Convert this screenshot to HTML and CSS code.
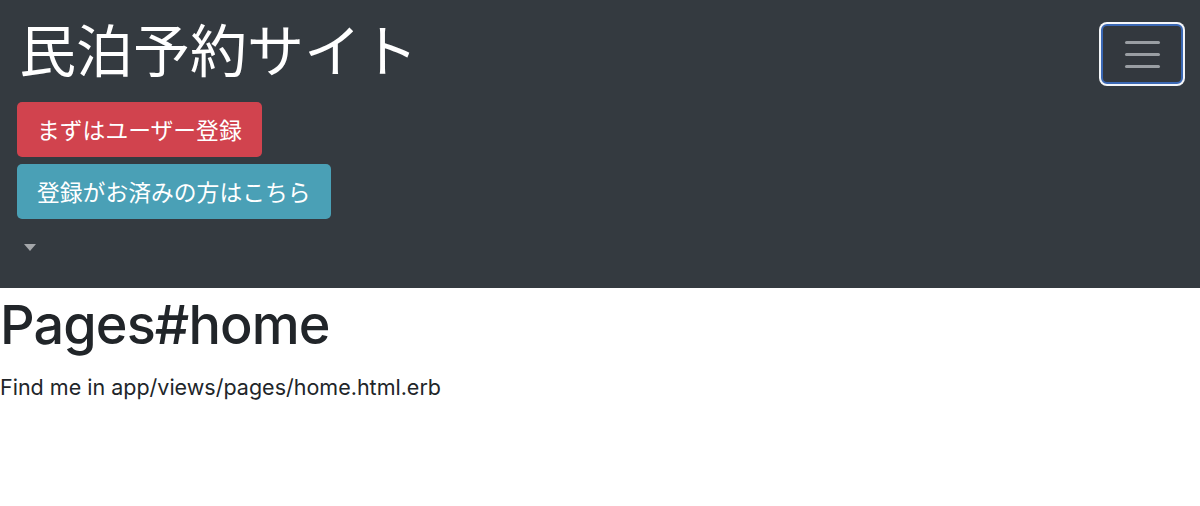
FILE: index.html
```html
<!DOCTYPE html>
<html lang="ja">
<head>
<meta charset="utf-8">
<title>民泊予約サイト</title>
<link rel="stylesheet" href="styles.css">
</head>
<body>
<nav class="navbar">
  <div class="nav-left">
    <a class="brand" href="#">民泊予約サイト</a>
    <div class="nav-buttons">
      <a class="btn btn-danger" href="#">まずはユーザー登録</a>
      <a class="btn btn-info" href="#">登録がお済みの方はこちら</a>
      <span class="caret"></span>
    </div>
  </div>
  <button class="toggler" type="button" aria-label="Toggle navigation">
    <span class="bar"></span><span class="bar"></span><span class="bar"></span>
  </button>
</nav>
<main class="content">
  <h1 class="title">Pages#home</h1>
  <p class="desc">Find me in app/views/pages/home.html.erb</p>
</main>
</body>
</html>
```
FILE: styles.css
```css
html, body {
  margin: 0;
  padding: 0;
  background: #ffffff;
  font-family: Inter, "Noto Sans CJK JP", sans-serif;
  color: #212529;
}

.navbar {
  background: #343a40;
  height: 288px;
  box-sizing: border-box;
  display: flex;
  justify-content: space-between;
  align-items: flex-start;
  padding: 14px 17px 0 17px;
}

.nav-left {
  display: flex;
  flex-direction: column;
  align-items: flex-start;
}

.brand {
  font-family: "Noto Sans CJK JP", sans-serif;
  color: #ffffff;
  text-decoration: none;
  font-size: 57px;
  line-height: 66px;
  padding-left: 2px;
}

.nav-buttons {
  display: flex;
  flex-direction: column;
  align-items: flex-start;
  gap: 7px;
  margin-top: 22px;
}

.btn {
  display: inline-block;
  font-family: "Noto Sans CJK JP", sans-serif;
  font-size: 22.8px;
  line-height: 55px;
  height: 55px;
  padding: 0 20px;
  border-radius: 5px;
  color: #ffffff;
  text-decoration: none;
  box-sizing: border-box;
}

.btn-danger {
  background: #d1434e;
}

.btn-info {
  background: #4aa0b6;
}

.caret {
  display: block;
  width: 0;
  height: 0;
  margin: 18px 0 0 7px;
  border-left: 6px solid transparent;
  border-right: 6px solid transparent;
  border-top: 7px solid #a4a7aa;
}

.toggler {
  margin-top: 10px;
  width: 82px;
  height: 60px;
  background: #33383e;
  border: 2px solid #3b68b4;
  border-radius: 6px;
  box-shadow: 0 0 0 2px #f4f6f9;
  display: flex;
  flex-direction: column;
  align-items: center;
  justify-content: center;
  gap: 9px;
  padding: 0;
}

.bar {
  display: block;
  width: 35px;
  height: 3px;
  border-radius: 2px;
  background: #9a9ea3;
}

.title {
  font-family: Inter, sans-serif;
  font-weight: 500;
  font-size: 54px;
  line-height: 70px;
  margin: 0;
  padding-top: 2px;
  letter-spacing: -0.9px;
}

.desc {
  font-family: Inter, sans-serif;
  font-size: 21.5px;
  line-height: 30px;
  margin: 12px 0 0 0;
}
```
